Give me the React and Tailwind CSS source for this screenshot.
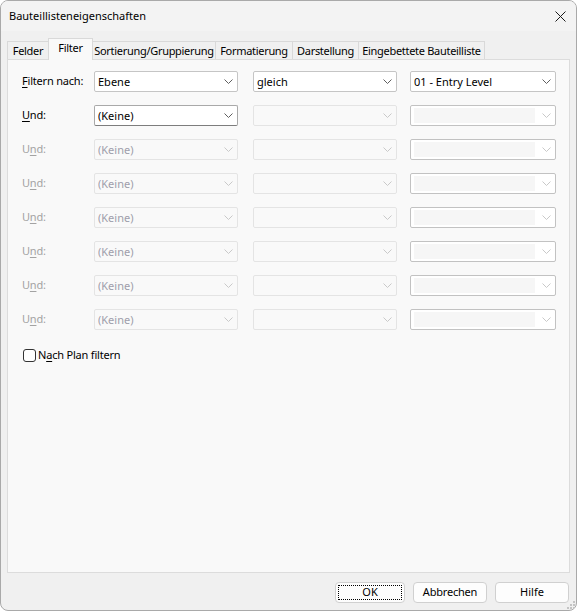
import React from 'react';

const font = { fontFamily: '"Noto Sans", "Open Sans", sans-serif' };

function Chevron({ light }) {
  return (
    <svg width="9" height="5" viewBox="0 0 9 5" className="shrink-0">
      <path d="M0.5 0.5 L4.5 4.5 L8.5 0.5" fill="none" stroke={light ? '#c9c9c9' : '#5f5f5f'} strokeWidth="1" />
    </svg>
  );
}

function Combo({ value, width, kind }) {
  // kind: enabled | focus | disabled | dim
  const box = {
    enabled: 'bg-white border-[#c5c5c5] text-black',
    focus: 'bg-white border-[#a9a9a9] border-b-[#7d7d7d] text-black',
    disabled: 'bg-[#f9f9f9] border-[#e4e4e4] text-[#9e9eab]',
    dim: 'bg-white border-[#c2c2c2] text-black',
  }[kind];
  return (
    <div className={`h-[21px] shrink-0 border rounded-[2px] flex items-center pl-[3px] pr-[4px] ${box}`} style={{ width }}>
      {kind === 'dim' ? (
        <div className="flex-1 h-[15px] bg-[#f6f6f6] mr-[7px]" />
      ) : (
        <span className="flex-1 text-[11px] leading-[15px] whitespace-nowrap overflow-hidden">{value}</span>
      )}
      <Chevron light={kind === 'disabled' || kind === 'dim'} />
    </div>
  );
}

function Row({ label, underline, enabled, first }) {
  return (
    <div className="flex items-center h-[21px]">
      <div className={`w-[72px] shrink-0 whitespace-nowrap text-[11px] tracking-[-0.2px] ${enabled ? 'text-black' : 'text-[#a3a3a3]'}`}>
        {label.slice(0, underline)}
        <span className="underline underline-offset-2">{label[underline]}</span>
        {label.slice(underline + 1)}
      </div>
      {first ? (
        <>
          <Combo value="Ebene" width={144} kind="enabled" />
          <div className="w-[15px] shrink-0" />
          <Combo value="gleich" width={144} kind="enabled" />
          <div className="w-[13px] shrink-0" />
          <Combo value="01 - Entry Level" width={146} kind="enabled" />
        </>
      ) : (
        <>
          <Combo value="(Keine)" width={144} kind={enabled ? 'focus' : 'disabled'} />
          <div className="w-[15px] shrink-0" />
          <Combo value="" width={144} kind="disabled" />
          <div className="w-[13px] shrink-0" />
          <Combo value="" width={146} kind="dim" />
        </>
      )}
    </div>
  );
}

const tabs = [
  ['Felder', 'w-[42px]'],
  ['Filter', 'w-[45px]'],
  ['Sortierung/Gruppierung', 'w-[124px]'],
  ['Formatierung', 'w-[78px]'],
  ['Darstellung', 'w-[67px]'],
  ['Eingebettete Bauteilliste', 'w-[127px]'],
];

export default function App() {
  return (
    <div className="relative w-[577px] h-[611px] bg-[#f0f0f0] border border-[#a9a9a9] rounded-[8px] overflow-hidden flex flex-col text-black" style={font}>
      <div className="h-[30px] shrink-0 bg-[#f3f3f3] flex items-center justify-between pl-[8px] pr-[10px]">
        <span className="text-[11px]">Bauteillisteneigenschaften</span>
        <svg width="11" height="11" viewBox="0 0 11 11">
          <path d="M0.5 0.5 L10.5 10.5 M10.5 0.5 L0.5 10.5" stroke="#1a1a1a" strokeWidth="1" />
        </svg>
      </div>
      <div className="flex-1 flex flex-col px-[6px] pt-[7px]">
        <div className="flex items-end h-[21px] relative z-10">
          {tabs.map(([t, w]) =>
            t === 'Filter' ? (
              <div key={t} className={`${w} h-[22px] -mb-px -ml-px bg-[#f9f9f9] border border-b-0 border-[#d9d9d9] text-center pt-[1px] text-[11px] tracking-[-0.3px] whitespace-nowrap`}>
                {t}
              </div>
            ) : (
              <div key={t} className={`${w} h-[18px] bg-[#f0f0f0] border border-b-0 border-[#d9d9d9] -ml-px first:ml-0 text-center text-[11px] tracking-[-0.3px] leading-[17px] whitespace-nowrap`}>
                {t}
              </div>
            )
          )}
        </div>
        <div className="h-[514px] bg-[#f9f9f9] border border-[#dcdcdc] pl-[14px] pt-[11px] flex flex-col gap-[13px]">
          <Row label="Filtern nach:" underline={0} first enabled />
          <Row label="Und:" underline={0} enabled />
          {[0, 1, 2, 3, 4, 5].map((i) => (
            <Row key={i} label="Und:" underline={1} />
          ))}
          <label className="flex items-center mt-[4px] pl-[1px] text-[11px] tracking-[-0.2px]">
            <span className="w-[13px] h-[13px] border border-[#333] rounded-[3px] bg-white mr-[2px]" />
            <span>N<span className="underline underline-offset-2">a</span>ch Plan filtern</span>
          </label>
        </div>
        <div className="flex justify-end gap-[8px] pr-[1px] pt-[9px]">
          <div className="w-[70px] h-[21px] bg-[#fdfdfd] border border-[#d0d0d0] rounded-[4px] p-[2px]">
            <div className="h-full border border-dotted border-black flex items-center justify-center text-[11px]">OK</div>
          </div>
          <div className="w-[74px] h-[21px] bg-[#fdfdfd] border border-[#d0d0d0] rounded-[4px] flex items-center justify-center text-[11px] tracking-[-0.2px]">Abbrechen</div>
          <div className="w-[74px] h-[21px] bg-[#fdfdfd] border border-[#d0d0d0] rounded-[4px] flex items-center justify-center text-[11px]">Hilfe</div>
        </div>
      </div>
      <svg className="absolute right-[1px] bottom-[1px]" width="8" height="8" viewBox="0 0 8 8">
        <g fill="#c4c4c4">
          <rect x="6" y="0" width="2" height="2" />
          <rect x="3" y="3" width="2" height="2" />
          <rect x="6" y="3" width="2" height="2" />
          <rect x="0" y="6" width="2" height="2" />
          <rect x="3" y="6" width="2" height="2" />
          <rect x="6" y="6" width="2" height="2" />
        </g>
      </svg>
    </div>
  );
}
